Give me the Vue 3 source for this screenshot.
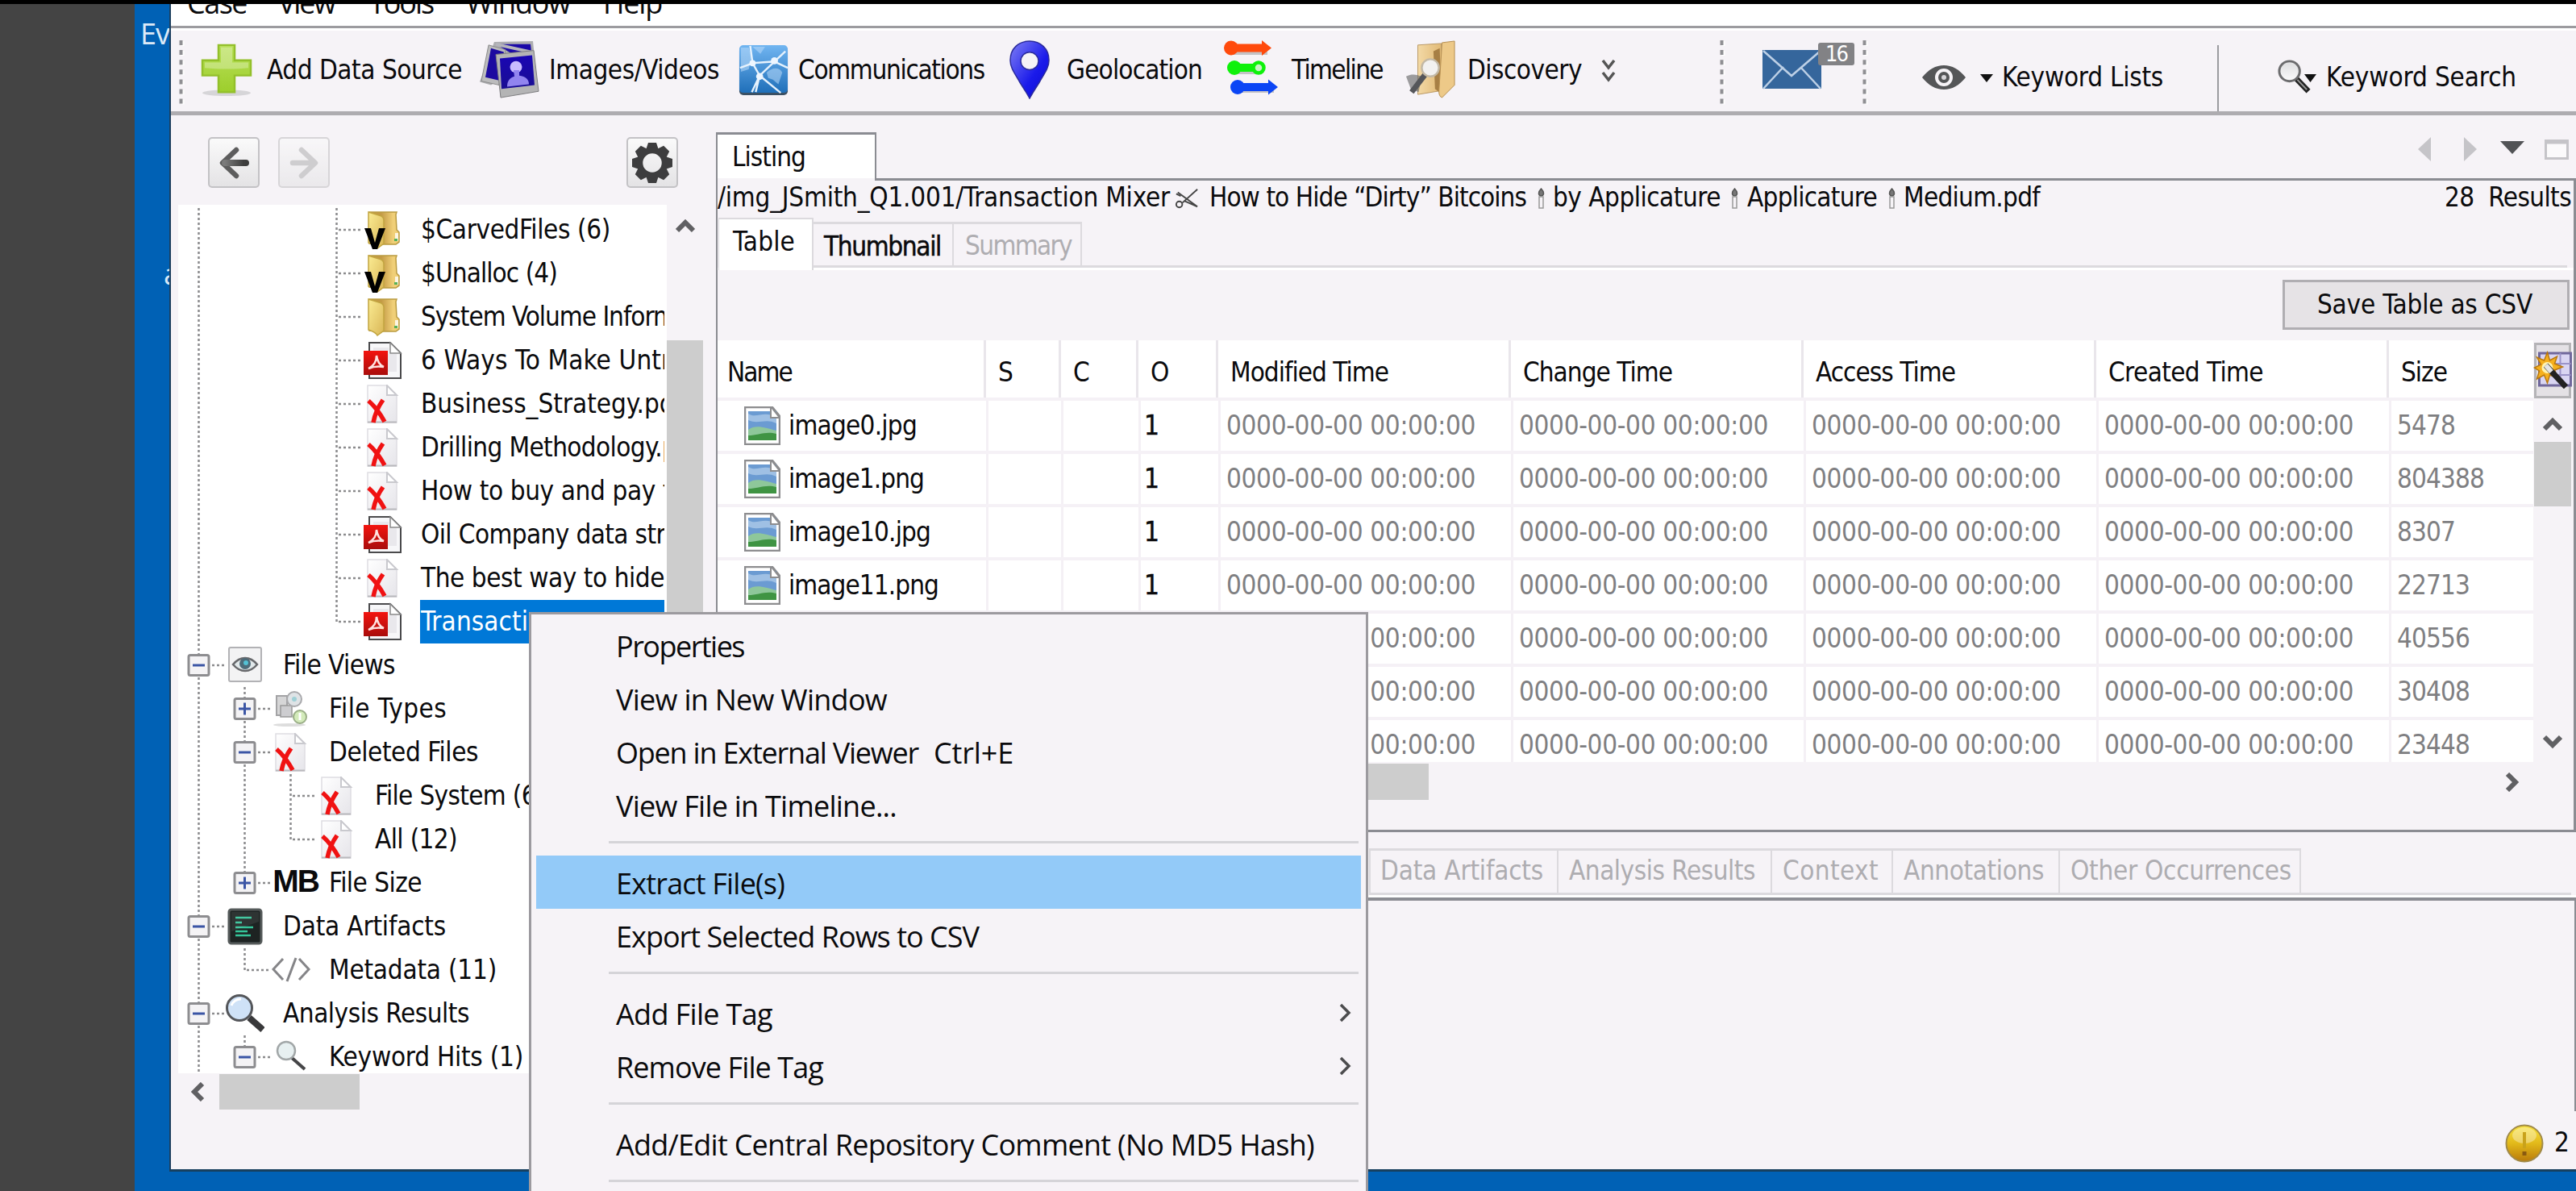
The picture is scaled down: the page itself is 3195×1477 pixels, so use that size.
<script setup>
// Shapes shared by the toolbar, the tree and the table; each is drawn in its own viewBox.
const page = '<path d="M5 1h24l12 12v34H5z" fill="url(#gPage)" stroke="#dedde2" stroke-width="1.5"/><path d="M5 46.5h36" stroke="#b9b9bd" stroke-width="2"/><path d="M29 1v12h12z" fill="#fff" stroke="#c9c9ce" stroke-width="2"/>'
const folder = '<path d="M7 2h34l-1 3 1 19 3 3v12l-4 3H22L7 41z" fill="url(#gFoldB)" stroke="#b99a3f" stroke-width="1.5"/><path d="M39 28h4v10h-4z" fill="#fff" opacity=".8"/><path d="M38 35h4v3h-4z" fill="#58b058"/><path d="M6 2l13 4c4 1 6 3 6 6v29l-8 6c-2-4-6-5-11-7z" fill="url(#gFoldF)" stroke="#c2a540" stroke-width="1.5"/>'
const icons = {
  plus: { vb: '0 0 64 70', s: '<ellipse cx="32" cy="65" rx="30" ry="4" fill="#c9c8cb" opacity=".7"/><path d="M22 2h20v20h20v20H42v22H22V42H2V22h20z" fill="url(#gPlus)" stroke="#93c02b" stroke-width="2.5"/><path d="M25 5h14v20h20v7c-14 2-38 2-54 0v-7h20z" fill="#fff" opacity=".28"/>' },
  images: { vb: '0 0 75 74', s: '<path d="M18 2l48-1 2 20-54 36-14-4z" fill="#adadb0"/><path d="M20 5h43l1 9-26 2z" fill="#1a08a8"/><path d="M11 6l-9 46 22 5 8-45z" fill="#bcbcbd" stroke="#8a8a8a"/><path d="M14 10L7 47l16 4 7-36z" fill="#1c0aa0"/><path d="M20 5l44 10" stroke="#b5b5bb" stroke-width="4"/><path d="M20 18l47-5 6 52-47 8z" fill="#b4b4b5" stroke="#7c7c7e"/><path d="M25 23l40-4 3 38-41 5z" fill="url(#gBlueV)"/><circle cx="45" cy="34" r="7.5" fill="#c9bcff"/><path d="M42 38h7v7c8 1 12 5 12 11l-27 3c0-7 3-11 9-13z" fill="#9184ef"/>' },
  comm: { vb: '0 0 64 66', s: '<rect x="1" y="3" width="62" height="62" rx="5" fill="#3b5064"/><rect x="1" y="1" width="62" height="61" rx="5" fill="url(#gComm)"/><path d="M3 4h10l4 12-4 16-10 3z M36 36c6-6 16-8 20 0l-5 15-7-6-6-2z M18 3l10 9 6-9z" fill="#b9dbfa" opacity=".55"/><g stroke="#e6f2fd" stroke-width="2.5" fill="none"><path d="M15 2l3 22 28-2L60 9M18 24L2 30M18 24l9 16 19-18 17 8M27 40L17 61M27 40l27 22M27 40l-5 21"/></g><circle cx="18" cy="24" r="4" fill="#eef6ff"/><circle cx="46" cy="21" r="4.500" fill="#eef6ff"/><circle cx="27" cy="41" r="4.500" fill="#eef6ff"/>' },
  pin: { vb: '0 0 52 74', s: '<path fill-rule="evenodd" d="M26 1C12 1 2 11 2 25c0 10 6 17 12 28 5 8 9 14 12 20 3-6 7-12 12-20 6-11 12-18 12-28C50 11 40 1 26 1zm0 14a11 11 0 1 1 0 22 11 11 0 0 1 0-22z" fill="url(#gPin)" stroke="#2a2a9c" stroke-width="1.5"/>' },
  timeline: { vb: '0 0 70 78', s: '<g opacity=".2" transform="translate(2 3)"><path d="M10 5h42v10H10zM12 29h32v10H12zM16 52h44v10H16z"/></g><g fill="#ff4a0c"><circle cx="9" cy="9.500" r="9"/><path d="M8 4.500h39V0l12 9.500L47 19v-4.500H8z"/></g><g fill="#0ff10b"><circle cx="13" cy="34" r="9"/><path d="M12 29h28v10H12z"/></g><circle cx="43" cy="34" r="6.500" fill="#c9f3c6" stroke="#0ff10b" stroke-width="4.500"/><g fill="#0b45f5"><circle cx="17" cy="58" r="9"/><path d="M16 53h39v-4.500L67 58l-12 9.500V63H16z"/></g>' },
  discovery: { vb: '0 0 64 74', s: '<path d="M15 6l30-2 1 60-31 5z" fill="url(#gTan)" stroke="#b99863"/><path d="M35 14l8-4 2 58-8-6z" fill="#a77f45"/><path d="M46 3l16-2v56L46 73c-3-1-4-4-4-8z" fill="#edc988" stroke="#b58d50"/><path d="M0 46c8-4 14-2 20 0L16 66 6 62z" fill="#6b6b6d" opacity=".65"/><path d="M24 44L7 66" stroke="#55565a" stroke-width="7"/><circle cx="31" cy="35" r="11" fill="#f2f1f0" stroke="#c3b9a6" stroke-width="2.500"/>' },
  more: { vb: '0 0 20 28', s: '<path d="M3 1l7 9 7-9M3 16l7 9 7-9" fill="none" stroke="#555" stroke-width="3.500"/>' },
  handle: { vb: '0 0 9 80', s: '<path d="M6.500 1v79" stroke="#fff" stroke-width="4" stroke-dasharray="6 6.100"/><path d="M4.500 0v79" stroke="#8f8f93" stroke-width="4" stroke-dasharray="6 6.100"/>' },
  mail: { vb: '0 0 114 60', s: '<rect x="0" y="11" width="73" height="48" fill="#35669c"/><path d="M1 12l35 31 36-31M1 59l25-27M72 59L47 32" fill="none" stroke="#bdd0e6" stroke-width="2.500"/><rect x="69" y="2" width="45" height="28" rx="3" fill="#828285"/>' },
  eye: { vb: '0 0 54 30', s: '<path fill-rule="evenodd" d="M0 15C8 5 17 0 27 0s19 5 27 15c-8 10-17 15-27 15S8 25 0 15zm27-11a11 11 0 1 0 0 22 11 11 0 0 0 0-22z" fill="#555658"/><circle cx="27" cy="15" r="7" fill="#555658"/><circle cx="27" cy="15" r="3" fill="#d8d6da"/>' },
  drop: { vb: '0 0 16 10', s: '<path d="M0 0h16L8 10z" fill="#111"/>' },
  lens: { vb: '0 0 42 44', s: '<path d="M24 25l15 16" stroke="#222" stroke-width="7"/><path d="M25 26l12 13" stroke="#999" stroke-width="2"/><circle cx="15" cy="15" r="13" fill="url(#gLens)" stroke="#6c6c6e" stroke-width="3"/>' },
  back: { vb: '0 0 40 40', s: '<path d="M23 4L6 20l17 16" fill="none" stroke="#5d5d5d" stroke-width="6.500" stroke-linecap="round" stroke-linejoin="round"/><path d="M9 20.010L35 20" stroke="url(#gArrow)" stroke-width="8" stroke-linecap="round"/><path d="M9 16.500h24v7H9z" fill="url(#gArrow)"/>' },
  next: { vb: '0 0 40 40', s: '<path d="M17 4l17 16-17 16M6 20h26" fill="none" stroke="#b4b4b5" stroke-width="6.500" stroke-linecap="round" stroke-linejoin="round"/>' },
  gear: { vb: '-25 -25 50 50', s: '<g fill="#3d3d3e"><path d="M-5-25H5l3 9H-8z"/><path d="M-5-25H5l3 9H-8z" transform="rotate(45)"/><path d="M-5-25H5l3 9H-8z" transform="rotate(90)"/><path d="M-5-25H5l3 9H-8z" transform="rotate(135)"/><path d="M-5-25H5l3 9H-8z" transform="rotate(180)"/><path d="M-5-25H5l3 9H-8z" transform="rotate(225)"/><path d="M-5-25H5l3 9H-8z" transform="rotate(270)"/><path d="M-5-25H5l3 9H-8z" transform="rotate(315)"/></g><circle r="15.500" fill="none" stroke="#3d3d3e" stroke-width="7.500"/>' },
  folder: { vb: '0 0 48 48', s: folder },
  vfolder: { vb: '0 0 48 48', s: folder + '<path d="M1 22h8l5 18 5-18h8L17 48h-6z" fill="#000"/>' },
  deleted: { vb: '0 0 48 48', s: page + '<path d="M6 20c7 6 14 15 20 26M24 19C19 26 14 36 12 47" stroke="#f01212" stroke-width="5.500" fill="none"/>' },
  pdf: { vb: '0 0 48 48', s: '<path d="M7 2h26l13 13v31H7z" fill="#f7f7f9" stroke="#4a4a4c" stroke-width="2"/><path d="M33 2v13h13z" fill="#fff" stroke="#888" stroke-width="1.500"/><path d="M12 8h19v8h10v22H12z" fill="#e9e8ec"/><rect x="0" y="12" width="30" height="30" fill="url(#gPdf)"/><path d="M6 34c6-3 10-9 10-16 1 7 4 12 9 14-6-1-12-1-19 2z" fill="none" stroke="#ffe3e0" stroke-width="2.500"/>' },
  views: { vb: '0 0 48 48', s: '<rect x="4" y="2" width="40" height="42" rx="2" fill="#f3f3f4" stroke="#b2b2b5" stroke-width="2"/><path d="M9 23c5-6 10-8 15-8s10 2 15 8c-5 6-10 8-15 8s-10-2-15-8z" fill="#e1e8ea" stroke="#68696c" stroke-width="2.500"/><circle cx="24" cy="22" r="7" fill="#4d6a78"/><circle cx="25" cy="21" r="3" fill="#53c1d4"/>' },
  types: { vb: '0 0 48 48', s: '<ellipse cx="22" cy="44" rx="20" ry="2" fill="#ddd"/><path d="M6 8h13v24H6z" fill="#d6d6d7" stroke="#a3a3a5" stroke-width="2"/><path d="M11 20h14v14H11z" fill="#cdcdd0" stroke="#999" stroke-width="1.500"/><circle cx="28" cy="12" r="9" fill="#dfe3e6" stroke="#a9a9ac" stroke-width="2"/><circle cx="28" cy="12" r="3" fill="#9fd0d6"/><circle cx="35" cy="34" r="8" fill="#d3ebba" stroke="#9aae87" stroke-width="2"/><path d="M35 29v9" stroke="#fff" stroke-width="3"/>' },
  data: { vb: '0 0 48 48', s: '<rect x="4" y="3" width="40" height="42" rx="3" fill="#1d2322" stroke="#555a5a" stroke-width="3"/><path d="M12 13h20M12 19h8M12 25h22M12 30h15M12 35h19" stroke="#35c499" stroke-width="2.500"/><path d="M7 6h34v12L7 30z" fill="#fff" opacity=".08"/>' },
  code: { vb: '0 0 48 48', s: '<path d="M14 10L2 23l12 13M34 10l12 13-12 13M30 9L19 38" fill="none" stroke="#858588" stroke-width="3"/>' },
  bigLens: { vb: '0 0 48 48', s: '<path d="M29 29l17 15" stroke="#39393b" stroke-width="8"/><circle cx="17" cy="17" r="15.500" fill="#cfe2f7" stroke="#54565a" stroke-width="3"/><path d="M7 14a12 12 0 0 1 12-8" stroke="#fff" stroke-width="3" fill="none"/>' },
  smallLens: { vb: '0 0 48 48', s: '<path d="M24 24l17 15" stroke="#454547" stroke-width="4"/><circle cx="18" cy="16" r="11" fill="#e7f0f1" stroke="#a2a7a8" stroke-width="2.500"/>' },
  image: { vb: '0 0 45 48', s: '<path d="M1 1h34l9 11v35H1z" fill="#fff" stroke="#8d8d8f" stroke-width="2.500"/><path d="M5 6h35v36H5z" fill="#6b9bd2"/><path d="M5 9c10 7 20-5 35 5v7c-14-7-22 2-35-4z" fill="#9fc0e4"/><path d="M5 29c9-7 20-3 35 1v12H5z" fill="#8ec79a"/><path d="M5 36c12 0 22-6 35-2v8H5z" fill="#3f9443"/><path d="M33 0v14h11z" fill="#fff" stroke="#8d8d8f" stroke-width="2"/>' },
  scissors: { vb: '0 0 32 32', s: '<g fill="none" stroke="#444" stroke-width="2"><path d="M30 4L10 22M30 27L4 8M12 19l18 8"/><circle cx="6" cy="24" r="4"/><path d="M2 10l6 3"/></g>' },
  candle: { vb: '0 0 11 26', s: '<path d="M5.500 1c4 4 4 8 0 9-4-1-4-5 0-9z" fill="#777" stroke="#555" stroke-width="1.500"/><path d="M3 11h5v14H3z" fill="none" stroke="#999" stroke-width="1.500"/>' },
  wizard: { vb: '0 0 48 48', s: '<path d="M7 4h39v40H7z" fill="#d9d5f2" stroke="#70689c" stroke-width="3"/><path d="M33 4v40M7 17h39M7 31h39" stroke="#9b94c8" stroke-width="2"/><path d="M17 3l3 10 9-5-3 9 10 4-10 4 4 10-10-4-3 10-4-10-9 5 3-10-6-4 8-4-5-9 9 4z" fill="#f6b01e" stroke="#b9780e" stroke-width="1.500"/><circle cx="17" cy="22" r="7" fill="#fff3b0"/><path d="M15 19l25 27" stroke="#222" stroke-width="7"/><path d="M15 19l7 8" stroke="#e5e5e5" stroke-width="6"/>' },
  warn: { vb: '0 0 48 48', s: '<circle cx="24" cy="24" r="22.500" fill="url(#gGold)" stroke="#a08a4a" stroke-width="2"/><ellipse cx="24" cy="14" rx="15" ry="10" fill="#fff" opacity=".35"/><path d="M24 10v20" stroke="#c9a21b" stroke-width="4"/><path d="M24 34v5" stroke="#8a5a10" stroke-width="5"/>' },
  up: { vb: '0 0 24 18', s: '<path d="M2 14L12 4l10 10" fill="none" stroke="#606063" stroke-width="6"/>' },
  down: { vb: '0 0 24 18', s: '<path d="M2 3l10 10L22 3" fill="none" stroke="#606063" stroke-width="6"/>' },
  left: { vb: '0 0 20 24', s: '<path d="M16 2L6 12l10 10" fill="none" stroke="#606063" stroke-width="6"/>' },
  right: { vb: '0 0 20 24', s: '<path d="M4 2l10 10L4 22" fill="none" stroke="#606063" stroke-width="6"/>' },
  sub: { vb: '0 0 16 24', s: '<path d="M3 2l10 10L3 22" fill="none" stroke="#4c4c4e" stroke-width="3.500"/>' },
  navL: { vb: '0 0 16 30', s: '<path d="M16 0v30L0 15z" fill="#c5c4c8"/>' },
  navR: { vb: '0 0 16 30', s: '<path d="M0 0v30l16-15z" fill="#c5c4c8"/>' },
  navD: { vb: '0 0 30 16', s: '<path d="M0 0h30L15 16z" fill="#525356"/>' },
  navM: { vb: '0 0 30 25', s: '<path d="M1.500 1.500h27v22h-27z" fill="#fbfafb" stroke="#c5c4c8" stroke-width="3"/><path d="M0 3.500h30" stroke="#c5c4c8" stroke-width="4"/>' }
}

// Letter-spaces an element so that it (or its leading part) takes the given width.
const vFit = {
  mounted(el, { value }) {
    const [w, lead] = Array.isArray(value) ? value : [value]
    const text = lead || el.textContent
    const probe = el.cloneNode(false)
    probe.textContent = text
    probe.style.cssText = 'position:absolute;visibility:hidden;width:auto;letter-spacing:0'
    el.parentNode.appendChild(probe)
    const natural = probe.getBoundingClientRect().width
    probe.remove()
    el.style.letterSpacing = (w - natural) / text.length + 'px'
  }
}

// Turns left edges into the gap that precedes each item of a row.
const place = (items, start) => {
  let x = start
  return items.map(i => {
    const gap = i.x - x
    x = i.x + i.w
    return { ...i, gap }
  })
}
const box = i => ({ marginLeft: i.gap + 'px', marginTop: (i.y || 0) + 'px', width: i.w + 'px', height: i.h ? i.h + 'px' : null })

const menus = place([
  { text: 'Case', x: 232, w: 74 }, { text: 'View', x: 345, w: 70 }, { text: 'Tools', x: 458, w: 79 },
  { text: 'Window', x: 578, w: 129 }, { text: 'Help', x: 748, w: 73 }
], 212)

const tools = place([
  { icon: 'handle', x: 220, w: 9, y: 12, h: 80 },
  { icon: 'plus', x: 249, w: 64, y: 16, h: 66 }, { text: 'Add Data Source', x: 331, w: 242, y: 29 },
  { icon: 'images', x: 595, w: 75, y: 12, h: 72 }, { text: 'Images/Videos', x: 681, w: 211, y: 29 },
  { icon: 'comm', x: 916, w: 62, y: 17, h: 64 }, { text: 'Communications', x: 990, w: 231, y: 29 },
  { icon: 'pin', x: 1251, w: 52, y: 12, h: 73 }, { text: 'Geolocation', x: 1323, w: 168, y: 29 },
  { icon: 'timeline', x: 1518, w: 70, y: 12, h: 78 }, { text: 'Timeline', x: 1602, w: 113, y: 29 },
  { icon: 'discovery', x: 1744, w: 62, y: 12, h: 72 }, { text: 'Discovery', x: 1820, w: 142, y: 29 },
  { icon: 'more', x: 1985, w: 20, y: 36, h: 28 },
  { icon: 'handle', x: 2131, w: 9, y: 12, h: 80 },
  { icon: 'mail', x: 2186, w: 114, y: 13, h: 60, badge: '16' },
  { icon: 'handle', x: 2308, w: 9, y: 12, h: 80 },
  { icon: 'eye', x: 2384, w: 54, y: 43, h: 30 }, { icon: 'drop', x: 2456, w: 16, y: 54, h: 10 },
  { text: 'Keyword Lists', x: 2483, w: 200, y: 38 },
  { sep: true, x: 2750, w: 2, y: 18, h: 82 },
  { icon: 'lens', x: 2825, w: 41, y: 36, h: 42 }, { icon: 'drop', x: 2858, w: 15, y: 54, h: 10 },
  { text: 'Keyword Search', x: 2885, w: 236, y: 38 }
], 212)

const path = place([
  { text: '/img_JSmith_Q1.001/Transaction Mixer', x: 890, w: 561 }, { icon: 'scissors', x: 1456, w: 32, y: 6, h: 30 },
  { text: 'How to Hide “Dirty” Bitcoins', x: 1500, w: 393 }, { icon: 'candle', x: 1906, w: 11, y: 8, h: 26 },
  { text: 'by Applicature', x: 1926, w: 208 }, { icon: 'candle', x: 2146, w: 11, y: 8, h: 26 },
  { text: 'Applicature', x: 2167, w: 161 }, { icon: 'candle', x: 2341, w: 11, y: 8, h: 26 },
  { text: 'Medium.pdf', x: 2361, w: 169 }, { text: '28  Results', x: 3032, w: 157 }
], 890)

// cells: v = line, t = branch, l = last branch, - / + = expander, p = last expander (closed), m = last expander (open)
const tree = [
  { cells: 'v  t', icon: 'vfolder', text: '$CarvedFiles (6)', fit: 235 },
  { cells: 'v  t', icon: 'vfolder', text: '$Unalloc (4)', fit: 169 },
  { cells: 'v  t', icon: 'folder', text: 'System Volume Information', fit: [217, 'System Volume'] },
  { cells: 'v  t', icon: 'pdf', text: '6 Ways To Make Untraceable', fit: [236, '6 Ways To Make'] },
  { cells: 'v  t', icon: 'deleted', text: 'Business_Strategy.pdf', fit: [277, 'Business_Strategy.'] },
  { cells: 'v  t', icon: 'deleted', text: 'Drilling Methodology.pdf', fit: [299, 'Drilling Methodology.'] },
  { cells: 'v  t', icon: 'deleted', text: 'How to buy and pay for', fit: [291, 'How to buy and pay'] },
  { cells: 'v  t', icon: 'pdf', text: 'Oil Company data structure', fit: [303, 'Oil Company data str'] },
  { cells: 'v  t', icon: 'deleted', text: 'The best way to hide', fit: 302 },
  { cells: 'v  l', icon: 'pdf', text: 'Transaction', fit: [133, 'Transacti'], on: true },
  { cells: '-', icon: 'views', text: 'File Views', fit: 139 },
  { cells: 'v+', icon: 'types', text: 'File Types', fit: 146 },
  { cells: 'v-', icon: 'deleted', text: 'Deleted Files', fit: 185 },
  { cells: 'vvt', icon: 'deleted', text: 'File System (6)', fit: [162, 'File System'] },
  { cells: 'vvl', icon: 'deleted', text: 'All (12)', fit: 102 },
  { cells: 'vp', mb: true, text: 'File Size', fit: 115 },
  { cells: '-', icon: 'data', text: 'Data Artifacts', fit: 202 },
  { cells: 'vl', icon: 'code', text: 'Metadata (11)', fit: 208 },
  { cells: '-', icon: 'bigLens', text: 'Analysis Results', fit: 231 },
  { cells: 'vm', icon: 'smallLens', text: 'Keyword Hits (1)', fit: 241 }
]
const vert = { v: 'M28.500 0v54', t: 'M28.500 0v54', l: 'M28.500 0v27', '-': 'M28.500 0v54', '+': 'M28.500 0v54', p: 'M28.500 0v27', m: 'M28.500 0v27' }

const heads = [['Name', 80], ['S', 16], ['C', 19], ['O', 24], ['Modified Time', 196], ['Change Time', 185], ['Access Time', 173], ['Created Time', 192], ['Size', 57]]
const rows = [
  ['image0.jpg', 159, '5478', 72], ['image1.png', 168, '804388', 108], ['image10.jpg', 176, '8307', 72], ['image11.png', 186, '22713', 90],
  ['image12.jpg', 176, '40556', 90], ['image13.jpg', 176, '30408', 90], ['image14.jpg', 176, '23448', 90]
]
const stamp = '0000-00-00 00:00:00'
const lowTabs = [['Data Artifacts', 202, 235], ['Analysis Results', 231, 265], ['Context', 119, 150], ['Annotations', 174, 207], ['Other Occurrences', 274, 299]]

const menu = [
  { text: 'Properties', w: 159 }, { text: 'View in New Window', w: 336 },
  { text: 'Open in External Viewer', w: 375, key: 'Ctrl+E' }, { text: 'View File in Timeline...', w: 348 }, null,
  { text: 'Extract File(s)', w: 209, on: true }, { text: 'Export Selected Rows to CSV', w: 450 }, null,
  { text: 'Add File Tag', w: 194, sub: true }, { text: 'Remove File Tag', w: 257, sub: true }, null,
  { text: 'Add/Edit Central Repository Comment (No MD5 Hash)', w: 866 }, null
]
</script>

<template>
  <div class="screen">
    <svg class="defs" width="0" height="0">
      <defs>
        <linearGradient id="gPage" x2="1" y2="1"><stop offset="0" stop-color="#fff" /><stop offset="1" stop-color="#e6e5ea" /></linearGradient>
        <linearGradient id="gFoldB"><stop offset=".4" stop-color="#c39a45" /><stop offset=".8" stop-color="#f0cf78" /></linearGradient>
        <linearGradient id="gFoldF" x2="1" y2="1"><stop offset="0" stop-color="#fbec93" /><stop offset="1" stop-color="#d9b656" /></linearGradient>
        <linearGradient id="gPlus" x2="0" y2="1"><stop offset="0" stop-color="#b9e05a" /><stop offset="1" stop-color="#9dce2c" /></linearGradient>
        <linearGradient id="gBlueV" x2="0" y2="1"><stop offset="0" stop-color="#1a06b4" /><stop offset="1" stop-color="#1a0e92" /></linearGradient>
        <linearGradient id="gComm" x2="0" y2="1"><stop offset="0" stop-color="#71b5f1" /><stop offset="1" stop-color="#1f6fb9" /></linearGradient>
        <linearGradient id="gPin" x2="1" y2="1"><stop offset="0" stop-color="#7f7ff5" /><stop offset=".6" stop-color="#1a1aea" /><stop offset="1" stop-color="#0a0ad0" /></linearGradient>
        <linearGradient id="gTan"><stop offset="0" stop-color="#f3d9a6" /><stop offset="1" stop-color="#e1b975" /></linearGradient>
        <linearGradient id="gLens" x2="0" y2="1"><stop offset="0" stop-color="#dcdcde" /><stop offset="1" stop-color="#fbfbfc" /></linearGradient>
        <linearGradient id="gArrow"><stop offset="0" stop-color="#7b7b7b" /><stop offset="1" stop-color="#3c3c3c" /></linearGradient>
        <linearGradient id="gPdf" x2="0" y2="1"><stop offset="0" stop-color="#f3140f" /><stop offset="1" stop-color="#a90d0c" /></linearGradient>
        <linearGradient id="gGold" x2="0" y2="1"><stop offset="0" stop-color="#f9e23c" /><stop offset=".5" stop-color="#e2b91a" /><stop offset="1" stop-color="#b97a0a" /></linearGradient>
      </defs>
    </svg>
    <div class="edge"></div>
    <div class="desk">
      <div class="wall"></div>
      <div class="strip">
        <span class="shortcut">Ev</span>
        <span class="shortcut small">a</span>
      </div>
      <main class="window">
        <nav class="menubar">
          <span v-for="m in menus" :key="m.text" v-fit="m.w" class="t ui" :style="box(m)">{{ m.text }}</span>
        </nav>
        <div class="toolbar">
          <template v-for="(i, n) in tools" :key="n">
            <span v-if="i.text" v-fit="i.w" class="t" :style="box(i)">{{ i.text }}</span>
            <i v-else-if="i.sep" class="tsep" :style="box(i)"></i>
            <span v-else class="ico" :style="box(i)">
              <svg :viewBox="icons[i.icon].vb" preserveAspectRatio="none" v-html="icons[i.icon].s"></svg>
              <b v-if="i.badge" class="badge">{{ i.badge }}</b>
            </span>
          </template>
        </div>

        <div class="body">
          <section class="left">
            <div class="nav">
              <span class="btn"><svg :viewBox="icons.back.vb" v-html="icons.back.s"></svg></span>
              <span class="btn off"><svg :viewBox="icons.next.vb" v-html="icons.next.s"></svg></span>
              <span class="btn gear"><svg :viewBox="icons.gear.vb" v-html="icons.gear.s"></svg></span>
            </div>
            <div class="treewrap">
              <div class="tree">
                <div v-for="r in tree" :key="r.text" class="row">
                  <svg v-for="(c, n) in r.cells" :key="n" class="cell" viewBox="0 0 57 54">
                    <template v-if="c !== ' '">
                      <path :d="vert[c]" class="dots" />
                      <path v-if="c === 't' || c === 'l'" d="M31 27h27" class="dots" />
                      <template v-else-if="c !== 'v'">
                        <path d="M45 27h15" class="dots" />
                        <rect x="16" y="14.500" width="25" height="25" rx="2" fill="#f4f3f5" stroke="#8d8d90" stroke-width="3" />
                        <path d="M21 27h15" stroke="#3b55a5" stroke-width="3" />
                        <path v-if="c === '+' || c === 'p'" d="M28.500 19.500v15" stroke="#3b55a5" stroke-width="3" />
                      </template>
                    </template>
                  </svg>
                  <span class="icocell">
                    <b v-if="r.mb" class="mb">MB</b>
                    <svg v-else :viewBox="icons[r.icon].vb" v-html="icons[r.icon].s"></svg>
                  </span>
                  <span class="lab" :class="{ on: r.on }"><span v-fit="r.fit" class="t">{{ r.text }}</span></span>
                </div>
              </div>
              <div class="vbar">
                <svg :viewBox="icons.up.vb" v-html="icons.up.s"></svg>
                <i></i>
              </div>
            </div>
            <div class="hbar">
              <svg :viewBox="icons.left.vb" v-html="icons.left.s"></svg>
              <i></i>
            </div>
          </section>

          <section class="right">
            <div class="tabs">
              <div class="listing"><span v-fit="91" class="t">Listing</span></div>
              <div class="tabfill">
                <svg class="nl" :viewBox="icons.navL.vb" v-html="icons.navL.s"></svg>
                <svg class="nr" :viewBox="icons.navR.vb" v-html="icons.navR.s"></svg>
                <svg class="nd" :viewBox="icons.navD.vb" v-html="icons.navD.s"></svg>
                <svg class="nm" :viewBox="icons.navM.vb" v-html="icons.navM.s"></svg>
              </div>
            </div>
            <div class="panel">
              <div class="path">
                <template v-for="(i, n) in path" :key="n">
                  <span v-if="i.text" v-fit="i.w" class="t" :style="box(i)">{{ i.text }}</span>
                  <span v-else class="ico" :style="box(i)"><svg :viewBox="icons[i.icon].vb" v-html="icons[i.icon].s"></svg></span>
                </template>
              </div>
              <div class="subtabs">
                <div class="st active"><span v-fit="77" class="t">Table</span></div>
                <div class="st thumb"><span v-fit="145" class="t">Thumbnail</span></div>
                <div class="st summ"><span v-fit="132" class="t dis">Summary</span></div>
                <div class="stfill"></div>
              </div>
              <div class="actions"><div class="save"><span v-fit="267" class="t">Save Table as CSV</span></div></div>
              <div class="tablewrap">
                <div class="table">
                  <div class="tr head">
                    <div v-for="h in heads" :key="h[0]" class="td"><span v-fit="h[1]" class="t">{{ h[0] }}</span></div>
                  </div>
                  <div v-for="r in rows" :key="r[0]" class="tr">
                    <div class="td name">
                      <svg :viewBox="icons.image.vb" v-html="icons.image.s"></svg>
                      <span v-fit="r[1]" class="t">{{ r[0] }}</span>
                    </div>
                    <div class="td"></div>
                    <div class="td"></div>
                    <div class="td one"><span class="t">1</span></div>
                    <div v-for="n in 4" :key="n" class="td"><span v-fit="309" class="t dim">{{ stamp }}</span></div>
                    <div class="td"><span v-fit="r[3]" class="t dim">{{ r[2] }}</span></div>
                  </div>
                </div>
                <div class="tbar">
                  <div class="wiz"><svg :viewBox="icons.wizard.vb" v-html="icons.wizard.s"></svg></div>
                  <svg class="up" :viewBox="icons.up.vb" v-html="icons.up.s"></svg>
                  <i></i>
                  <svg class="dn" :viewBox="icons.down.vb" v-html="icons.down.s"></svg>
                </div>
              </div>
              <div class="thbar"><i></i><svg :viewBox="icons.right.vb" v-html="icons.right.s"></svg></div>
            </div>
            <div class="lowtabs">
              <div v-for="l in lowTabs" :key="l[0]" class="lt" :style="{ width: l[2] + 'px' }"><span v-fit="l[1]" class="t dis">{{ l[0] }}</span></div>
              <div class="ltfill"></div>
            </div>
            <div class="viewer"></div>
            <div class="status">
              <svg :viewBox="icons.warn.vb" v-html="icons.warn.s"></svg>
              <span class="t">2</span>
            </div>
          </section>
        </div>
      </main>
    </div>

    <div class="popup">
      <template v-for="(m, n) in menu" :key="n">
        <div v-if="!m" class="psep"><i></i></div>
        <div v-else class="pitem" :class="{ on: m.on }">
          <span v-fit="m.w" class="t ui">{{ m.text }}</span>
          <span v-if="m.key" v-fit="99" class="t ui key">{{ m.key }}</span>
          <svg v-if="m.sub" class="sub" :viewBox="icons.sub.vb" v-html="icons.sub.s"></svg>
        </div>
      </template>
    </div>
  </div>
</template>

<style>
body { margin: 0; overflow: hidden; }
</style>

<style scoped>
* { box-sizing: border-box; }
.screen { position: relative; width: 3195px; height: 1477px; overflow: hidden; background: #0061b5; font-family: "DejaVu Sans Condensed", "DejaVu Sans", sans-serif; font-stretch: condensed; font-size: 33px; color: #0a0a0c; }
.defs { position: absolute; }
svg { display: block; flex: none; }
.edge { height: 5px; background: #000; }
.desk { display: flex; height: 1472px; }
.wall { width: 167px; flex: none; background: #444; }
.strip { width: 43px; flex: none; overflow: hidden; padding: 15px 0 0 7px; }
.shortcut { display: block; font: 36px/44px "Open Sans", sans-serif; color: #dbe9f7; letter-spacing: -1px; }
.shortcut.small { margin: 254px 0 0 29px; }
.window { flex: none; width: 2985px; height: 1448px; border-left: 2px solid #1d3f5e; border-bottom: 3px solid #17405f; background: #f6f3f7; display: flex; flex-direction: column; }
.t { display: block; flex: none; white-space: pre; line-height: 40px; }
.ui { font-family: "Open Sans", sans-serif; font-stretch: normal; font-size: 36px; }
.dim { color: #7f7f82; }
.dis { color: #aeadb1; }
.ico { flex: none; position: relative; }
.ico svg { width: 100%; height: 100%; }

.menubar { display: flex; height: 33px; flex: none; background: #fff; overflow: hidden; border-bottom: 3px solid #fff; box-shadow: inset 0 -3px #9c9b9f; }
.menubar .t { position: relative; top: -21px; }
.toolbar { display: flex; align-items: flex-start; height: 105px; flex: none; border-bottom: 5px solid #aeacb0; }
.tsep { flex: none; background: #9b9b9f; }
.badge { position: absolute; left: 69px; top: 0; width: 45px; text-align: center; font-size: 27px; line-height: 32px; letter-spacing: -2px; color: #fff; font-weight: 400; }

.body { display: flex; flex: 1; min-height: 0; }
.left { width: 675px; flex: none; padding: 27px 0 0 9px; }
.nav { display: flex; height: 84px; padding-left: 37px; }
.btn { width: 64px; height: 63px; margin-right: 23px; border: 2px solid #c3c2c5; border-radius: 5px; background: linear-gradient(#fafafa, #e4e3e5); display: flex; align-items: center; justify-content: center; }
.btn svg { width: 40px; height: 40px; }
.btn.off { opacity: .6; }
.btn.gear { margin-left: 345px; }
.btn.gear svg { width: 50px; height: 50px; }
.treewrap { display: flex; height: 1077px; }
.tree { width: 606px; background: #fff; padding: 4px 3px 0 0; overflow: hidden; }
.row { display: flex; height: 54px; margin-left: -3px; }
.cell { width: 57px; height: 54px; overflow: visible; }
.dots { fill: none; stroke: #8b8b8d; stroke-width: 2.5; stroke-dasharray: 3 3; }
.icocell { width: 57px; flex: none; display: flex; justify-content: center; align-items: center; }
.icocell svg { width: 48px; height: 48px; }
.mb { font: bold 39px/50px "Liberation Sans", sans-serif; margin: -4px 0 0 12px; letter-spacing: -2px; }
.lab { margin-left: 18px; flex: 1 0 0; overflow: hidden; padding: 7px 0 0 1px; }
.lab.on { background: #0078d7; color: #fff; }
.vbar { width: 45px; padding-top: 18px; display: flex; flex-direction: column; align-items: center; }
.vbar svg { width: 24px; height: 18px; }
.vbar i { width: 45px; margin-top: 132px; flex: 1; background: #cdcdcd; }
.hbar { display: flex; align-items: center; height: 45px; padding-left: 14px; }
.hbar svg { width: 20px; height: 24px; }
.hbar i { width: 174px; height: 44px; margin-left: 17px; background: #cdcdcd; }

.right { width: 2308px; flex: none; display: flex; flex-direction: column; }
.tabs { display: flex; height: 81px; flex: none; padding: 21px 0 0 1px; }
.listing { width: 199px; height: 60px; border: solid #8b8c92; border-width: 3px 2px 0; background: linear-gradient(#fff 54px, #f6f3f7 54px); padding: 8px 0 0 18px; }
.tabfill { flex: 1; display: flex; border-bottom: 3px solid #8b8c92; padding-left: 1912px; }
.nl { width: 16px; height: 30px; margin-top: 6px; }
.nr { width: 16px; height: 30px; margin: 6px 0 0 41px; }
.nd { width: 30px; height: 16px; margin: 11px 0 0 29px; }
.nm { width: 30px; height: 25px; margin: 9px 0 0 25px; }
.panel { margin-left: 1px; height: 808px; flex: none; border: solid #8b8c92; border-width: 0 3px 3px 2px; }
.path { display: flex; height: 41px; padding-top: 1px; }
.subtabs { display: flex; height: 70px; padding-left: 1px; background: linear-gradient(transparent 67px, #fff 67px); }
.st { flex: none; }
.st.active { width: 118px; height: 65px; margin-top: 5px; background: #fff; border: solid #dcdade; border-width: 2px 2px 0 1px; padding: 8px 0 0 17px; }
.st.thumb { width: 174px; height: 57px; margin-top: 10px; border: solid #dcdade; border-width: 3px 2px 3px 0; padding: 8px 0 0 13px; -webkit-text-stroke: .5px #0a0a0c; }
.st.summ { width: 159px; height: 57px; margin-top: 10px; border: solid #dcdade; border-width: 3px 2px 3px 0; padding: 7px 0 0 14px; }
.stfill { flex: 1; height: 3px; margin: 64px 8px 0 0; background: #dcdade; }
.actions { height: 87px; display: flex; justify-content: flex-end; padding: 12px 5px 0 0; }
.save { width: 356px; height: 62px; background: #e6e3e6; border: 3px solid #b0aeb2; padding: 8px 0 0 40px; }
.tablewrap { display: flex; height: 523px; }
.table { width: 2252px; height: 523px; overflow: hidden; background: #fff; }
.tr { display: grid; grid-template-columns: 336px 93px 96px 99px repeat(4, 363px) 176px; height: 66px; border-bottom: 4px solid #f5f1f6; }
.td { border-right: 3px solid #f4f0f5; padding: 11px 0 0 7px; overflow: hidden; }
.td:last-child { border-right: 0; }
.name { display: flex; padding: 7px 0 0 33px; }
.name svg { width: 45px; height: 48px; }
.name .t { margin: 4px 0 0 10px; }
.one { -webkit-text-stroke: .5px #0a0a0c; padding-left: 4px; }
.head { grid-template-columns: 333px 93px 96px 99px repeat(4, 363px) 179px; height: 75px; }
.head .td { padding: 20px 0 0 15px; border-color: #e9e6eb; }
.head .td:first-child { padding-left: 12px; }
.tbar { width: 48px; display: flex; flex-direction: column; align-items: center; }
.wiz { width: 46px; height: 69px; margin-top: 3px; border: 3px solid #b5b4b7; background: #e4e1e5; padding-top: 6px; }
.wiz svg { width: 49px; height: 48px; margin-left: -4px; }
.tbar .up { width: 24px; height: 18px; margin-top: 24px; }
.tbar i { width: 46px; height: 80px; margin-top: 12px; background: #cdcdcd; }
.tbar .dn { width: 24px; height: 18px; margin-top: 283px; }
.thbar { display: flex; height: 50px; }
.thbar i { width: 400px; height: 45px; margin: 2px 0 0 482px; background: #cdcdcd; }
.thbar svg { width: 20px; height: 24px; margin: 13px 0 0 1334px; }
.lowtabs { display: flex; height: 81px; flex: none; padding: 20px 0 0 811px; background: linear-gradient(transparent 78px, #fff 78px); }
.lt { height: 58px; flex: none; border: solid #dcdade; border-width: 3px 2px 3px 0; padding: 5px 0 0 13px; }
.lt:first-child { border-left-width: 2px; padding-left: 12px; }
.ltfill { flex: 1; height: 3px; margin: 55px 6px 0 0; background: #dcdade; }
.viewer { height: 265px; flex: none; margin-left: 1px; border: solid #8b8c92; border-width: 4px 2px 0 2px; }
.status { flex: 1; display: flex; padding: 16px 0 0 2220px; }
.status svg { width: 48px; height: 48px; }
.status .t { margin: 3px 0 0 13px; }

.popup { position: absolute; left: 656px; top: 759px; width: 1041px; height: 730px; background: #f6f3f7; border: 3px solid #9c9a9f; padding: 5px 6px; }
.pitem { height: 66px; display: flex; padding: 15px 0 0 99px; position: relative; }
.pitem.on { background: #93caf8; }
.key { margin-left: 19px; }
.sub { position: absolute; right: 12px; top: 21px; width: 16px; height: 24px; }
.psep { height: 30px; padding: 12px 3px 0 90px; }
.psep i { display: block; height: 3px; background: #d5d4d8; }
</style>
